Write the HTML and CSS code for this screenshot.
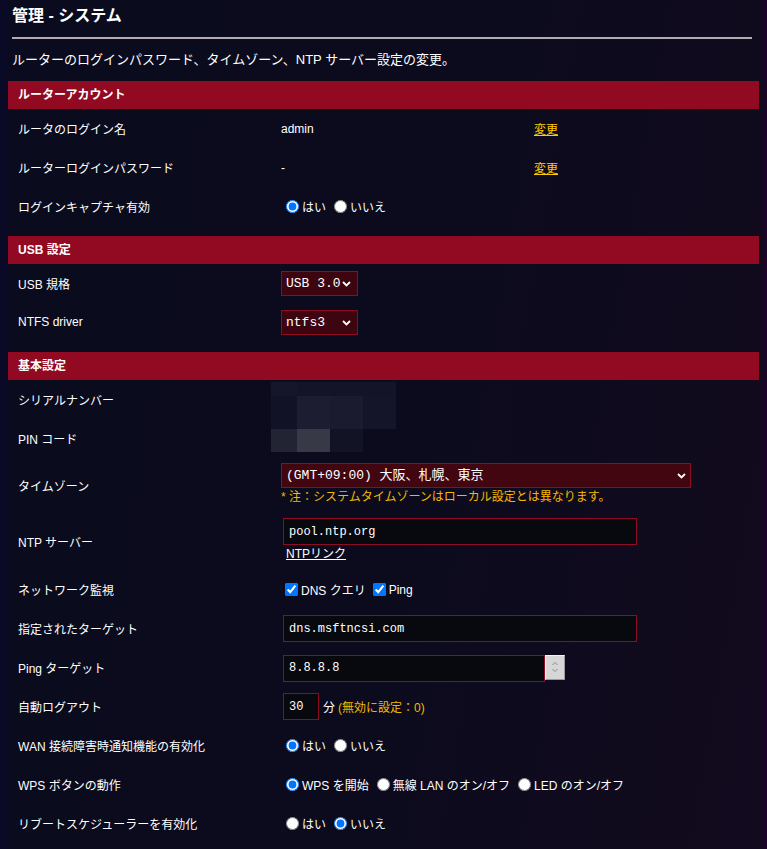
FILE: index.html
```html
<!DOCTYPE html>
<html lang="ja">
<head>
<meta charset="utf-8">
<title>管理 - システム</title>
<link rel="stylesheet" href="styles.css">
</head>
<body>
<div class="page">
  <h1 class="title">管理 - システム</h1>
  <div class="rule"></div>
  <p class="desc">ルーターのログインパスワード、タイムゾーン、NTP サーバー設定の変更。</p>

  <section class="sec">
    <div class="sec-head">ルーターアカウント</div>
    <div class="row">
      <div class="lbl">ルータのログイン名</div>
      <div class="val split"><span class="v">admin</span><a class="link" href="#">変更</a></div>
    </div>
    <div class="row">
      <div class="lbl">ルーターログインパスワード</div>
      <div class="val split"><span class="v">-</span><a class="link" href="#">変更</a></div>
    </div>
    <div class="row">
      <div class="lbl">ログインキャプチャ有効</div>
      <div class="val"><label><input type="radio" name="cap" checked>はい</label> <label><input type="radio" name="cap">いいえ</label></div>
    </div>
  </section>

  <section class="sec">
    <div class="sec-head">USB 設定</div>
    <div class="row">
      <div class="lbl">USB 規格</div>
      <div class="val"><span class="selwrap"><select class="sel"><option>USB 3.0</option></select><svg class="chev" width="9" height="6" viewBox="0 0 9 6"><path d="M1 1 L4.5 4.5 L8 1" fill="none" stroke="#fff" stroke-width="1.8"/></svg></span></div>
    </div>
    <div class="row">
      <div class="lbl">NTFS driver</div>
      <div class="val"><span class="selwrap"><select class="sel"><option>ntfs3</option></select><svg class="chev" width="9" height="6" viewBox="0 0 9 6"><path d="M1 1 L4.5 4.5 L8 1" fill="none" stroke="#fff" stroke-width="1.8"/></svg></span></div>
    </div>
  </section>

  <section class="sec">
    <div class="sec-head">基本設定</div>
    <div class="row">
      <div class="lbl">シリアルナンバー</div>
      <div class="val mosaic-host">
        <div class="mosaic">
          <i style="background:#15162a"></i><i style="background:#131427"></i><i style="background:#131427"></i><i style="background:#131427"></i>
          <i style="background:#111226"></i><i style="background:#1c1d30"></i><i style="background:#1a1b2e"></i><i style="background:#141528"></i>
          <i style="background:#222333"></i><i style="background:#383946"></i><i style="background:#121325"></i><i style="background:transparent"></i>
        </div>
      </div>
    </div>
    <div class="row">
      <div class="lbl">PIN コード</div>
      <div class="val"></div>
    </div>
    <div class="row tall">
      <div class="lbl">タイムゾーン</div>
      <div class="val stack tz">
        <span class="selwrap"><select class="sel wide"><option>(GMT+09:00) 大阪、札幌、東京</option></select><svg class="chev tzchev" width="9" height="6" viewBox="0 0 9 6"><path d="M1 1 L4.5 4.5 L8 1" fill="none" stroke="#fff" stroke-width="1.8"/></svg></span>
        <span class="note">* 注：システムタイムゾーンはローカル設定とは異なります。</span>
      </div>
    </div>
    <div class="row tall">
      <div class="lbl">NTP サーバー</div>
      <div class="val stack ntp">
        <input class="inp long" type="text" value="pool.ntp.org">
        <a class="ntplink" href="#">NTPリンク</a>
      </div>
    </div>
    <div class="row">
      <div class="lbl">ネットワーク監視</div>
      <div class="val"><label><input type="checkbox" checked>DNS クエリ</label> <label><input type="checkbox" checked>Ping</label></div>
    </div>
    <div class="row">
      <div class="lbl">指定されたターゲット</div>
      <div class="val"><input class="inp long" type="text" value="dns.msftncsi.com"></div>
    </div>
    <div class="row">
      <div class="lbl">Ping ターゲット</div>
      <div class="val pingval">
        <input class="inp ping" type="text" value="8.8.8.8">
        <span class="spin"><svg width="8" height="14" viewBox="0 0 8 14"><path d="M1.5 5 L4 2.5 L6.5 5" fill="none" stroke="#8a8a8a" stroke-width="1"/><path d="M1.5 9 L4 11.5 L6.5 9" fill="none" stroke="#8a8a8a" stroke-width="1"/></svg></span>
      </div>
    </div>
    <div class="row">
      <div class="lbl">自動ログアウト</div>
      <div class="val"><input class="inp short" type="text" value="30"><span class="unit">分</span><span class="note hint">(無効に設定：0)</span></div>
    </div>
    <div class="row">
      <div class="lbl">WAN 接続障害時通知機能の有効化</div>
      <div class="val"><label><input type="radio" name="wan" checked>はい</label> <label><input type="radio" name="wan">いいえ</label></div>
    </div>
    <div class="row">
      <div class="lbl">WPS ボタンの動作</div>
      <div class="val"><label><input type="radio" name="wps" checked>WPS を開始</label> <label><input type="radio" name="wps">無線 LAN のオン/オフ</label> <label><input type="radio" name="wps">LED のオン/オフ</label></div>
    </div>
    <div class="row">
      <div class="lbl">リブートスケジューラーを有効化</div>
      <div class="val"><label><input type="radio" name="rb">はい</label> <label><input type="radio" name="rb" checked>いいえ</label></div>
    </div>
  </section>
</div>
</body>
</html>
```

FILE: styles.css
```css
html, body {
  margin: 0;
  padding: 0;
  overflow: hidden;
}

body {
  width: 767px;
  height: 849px;
  font-family: "Liberation Sans", "Noto Sans CJK JP", sans-serif;
  color: #fff;
  background:
    linear-gradient(to right, #0a0a26 0, #0a0a26 8px, transparent 8px),
    linear-gradient(to left, #1c0428 0, #1c0428 4px, transparent 4px),
    linear-gradient(100deg, #0a0b1e 0%, #0c0b1d 55%, #130a1e 100%);
}

.page {
  width: 751px;
  padding: 0 8px;
}

.title {
  margin: 0;
  padding: 6px 0 0 4px;
  font-size: 16px;
  line-height: 20px;
  font-weight: bold;
}

.rule {
  margin: 11px 7px 0 4px;
  height: 2px;
  background: #b3abb3;
}

.desc {
  margin: 12px 0 12px 4px;
  font-size: 13px;
  line-height: 18px;
}

.sec {
  margin-bottom: 10px;
}

.sec-head {
  background: #920a21;
  height: 28px;
  line-height: 28px;
  padding-left: 10px;
  font-size: 12px;
  font-weight: bold;
}

.row {
  display: grid;
  grid-template-columns: 273px 1fr;
  min-height: 39px;
  align-items: center;
  font-size: 12px;
}

.row.tall {
  min-height: 56px;
}

.lbl {
  padding-left: 10px;
  margin-top: -1px;
}

.val {
  display: flex;
  align-items: center;
  white-space: nowrap;
}

.val label {
  display: inline-flex;
  align-items: center;
}

.val label + label {
  margin-left: 3px;
}

.split .v {
  width: 253px;
}

.link {
  color: #ffcc00;
  text-decoration: underline;
}

input[type="radio"] {
  width: 13px;
  height: 13px;
  margin: 0 3px 0 5px;
}

input[type="checkbox"] {
  width: 13px;
  height: 13px;
  margin: 0 3px 0 4px;
}

.selwrap {
  position: relative;
  display: inline-block;
}

.sel {
  appearance: none;
  -webkit-appearance: none;
  box-sizing: border-box;
  width: 77px;
  height: 25px;
  padding: 0 0 0 4px;
  background: #3c0510;
  border: 1px solid #8e0b22;
  border-radius: 0;
  color: #fff;
  font-family: "Liberation Mono", "Noto Sans CJK JP", monospace;
  font-size: 13px;
  display: block;
}

.sel.wide {
  width: 410px;
  background: #420611;
}

.chev {
  position: absolute;
  right: 7px;
  top: 10px;
  pointer-events: none;
}

.tzchev {
  right: 5px;
}

.stack {
  flex-direction: column;
  align-items: flex-start;
  align-self: stretch;
}

.tz {
  padding-top: 5px;
}

.ntp {
  padding-top: 4px;
}

.note {
  color: #f5b800;
}

.tz .note {
  line-height: 16px;
  margin-top: 1px;
}

.inp {
  box-sizing: border-box;
  height: 27px;
  margin: 0 0 0 2px;
  padding: 0 5px;
  background: #08080f;
  border: 1px solid #8e0b22;
  border-radius: 0;
  color: #fff;
  font-family: "Liberation Mono", monospace;
  font-size: 12px;
  outline: none;
}

.inp.long {
  width: 354px;
}

.inp.ping {
  width: 262px;
}

.inp.short {
  width: 36px;
}

.ntplink {
  color: #fff;
  text-decoration: underline;
  margin-left: 5px;
  line-height: 16px;
  margin-top: 1px;
}

.pingval {
  align-items: flex-start;
  padding-top: 1px;
}

.spin {
  box-sizing: border-box;
  width: 20px;
  height: 25px;
  background: #d6d6d6;
  border-top: 1px solid #f4f4f4;
  border-left: 1px solid #f4f4f4;
  border-right: 1px solid #9a9a9a;
  border-bottom: 1px solid #9a9a9a;
  display: flex;
  align-items: center;
  justify-content: center;
}

.unit {
  margin-left: 4px;
}

.hint {
  margin-left: 3px;
}

.mosaic-host {
  position: relative;
  align-self: stretch;
}

.mosaic {
  position: absolute;
  left: -10px;
  top: 2px;
  display: grid;
  grid-template-columns: 26px 33px 33px 33px;
  grid-template-rows: 14px 33px 23px;
}

.mosaic i {
  display: block;
}
```
